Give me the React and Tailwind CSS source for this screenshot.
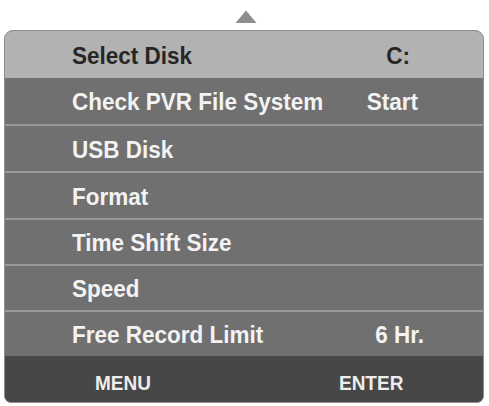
import React from "react";

const rows = [
  { label: "Check PVR File System", value: "Start", pr: "pr-[65px]", h: "h-[46px]", divider: false },
  { label: "USB Disk", value: "", pr: "", h: "h-[47px]", divider: true },
  { label: "Format", value: "", pr: "", h: "h-[47px]", divider: true },
  { label: "Time Shift Size", value: "", pr: "", h: "h-[46px]", divider: true },
  { label: "Speed", value: "", pr: "", h: "h-[46px]", divider: true },
  { label: "Free Record Limit", value: "6 Hr.", pr: "pr-[59px]", h: "h-[46px]", divider: true },
];

export default function App() {
  return (
    <div
      className="w-[489px] h-[406px] bg-white overflow-hidden"
      style={{ fontFamily: '"Liberation Sans", Arial, sans-serif' }}
    >
      <div className="h-[30px] flex justify-center items-start pt-[10px] pl-[3px]">
        <svg width="22" height="14" viewBox="0 0 22 14">
          <polygon points="11,0.5 21.5,13 0.5,13" fill="#8d8d8d" />
        </svg>
      </div>
      <div className="ml-[4px] w-[480px] h-[373px] rounded-t-[9px] rounded-b-[7px] overflow-hidden flex flex-col border border-[#8e8e8e] bg-[#707070]">
        <div className="h-[47px] shrink-0 bg-[#b2b2b2] flex items-center pl-[67px] pr-[73px] pt-[4px] text-[22.5px] font-bold text-[#262626]">
          <span className="scale-y-105">Select Disk</span>
          <span className="ml-auto scale-y-105">C:</span>
        </div>
        {rows.map((r) => (
          <div
            key={r.label}
            className={`${r.h} shrink-0 flex flex-col bg-[#707070]`}
          >
            {r.divider ? <div className="h-[2px] bg-[#999999] shrink-0" /> : null}
            <div
              className={`flex-1 flex items-center pl-[67px] ${r.pr} pt-[4px] text-[22.5px] font-bold text-[#f3f3f3]`}
            >
              <span className="scale-y-105">{r.label}</span>
              {r.value ? <span className="ml-auto scale-y-105">{r.value}</span> : null}
            </div>
          </div>
        ))}
        <div className="flex-1 bg-[#474747] flex items-center pt-[9px] text-[19px] font-bold text-[#ededed]">
          <span className="ml-[90px] scale-y-110">MENU</span>
          <span className="ml-[188px] scale-y-110">ENTER</span>
        </div>
      </div>
    </div>
  );
}
